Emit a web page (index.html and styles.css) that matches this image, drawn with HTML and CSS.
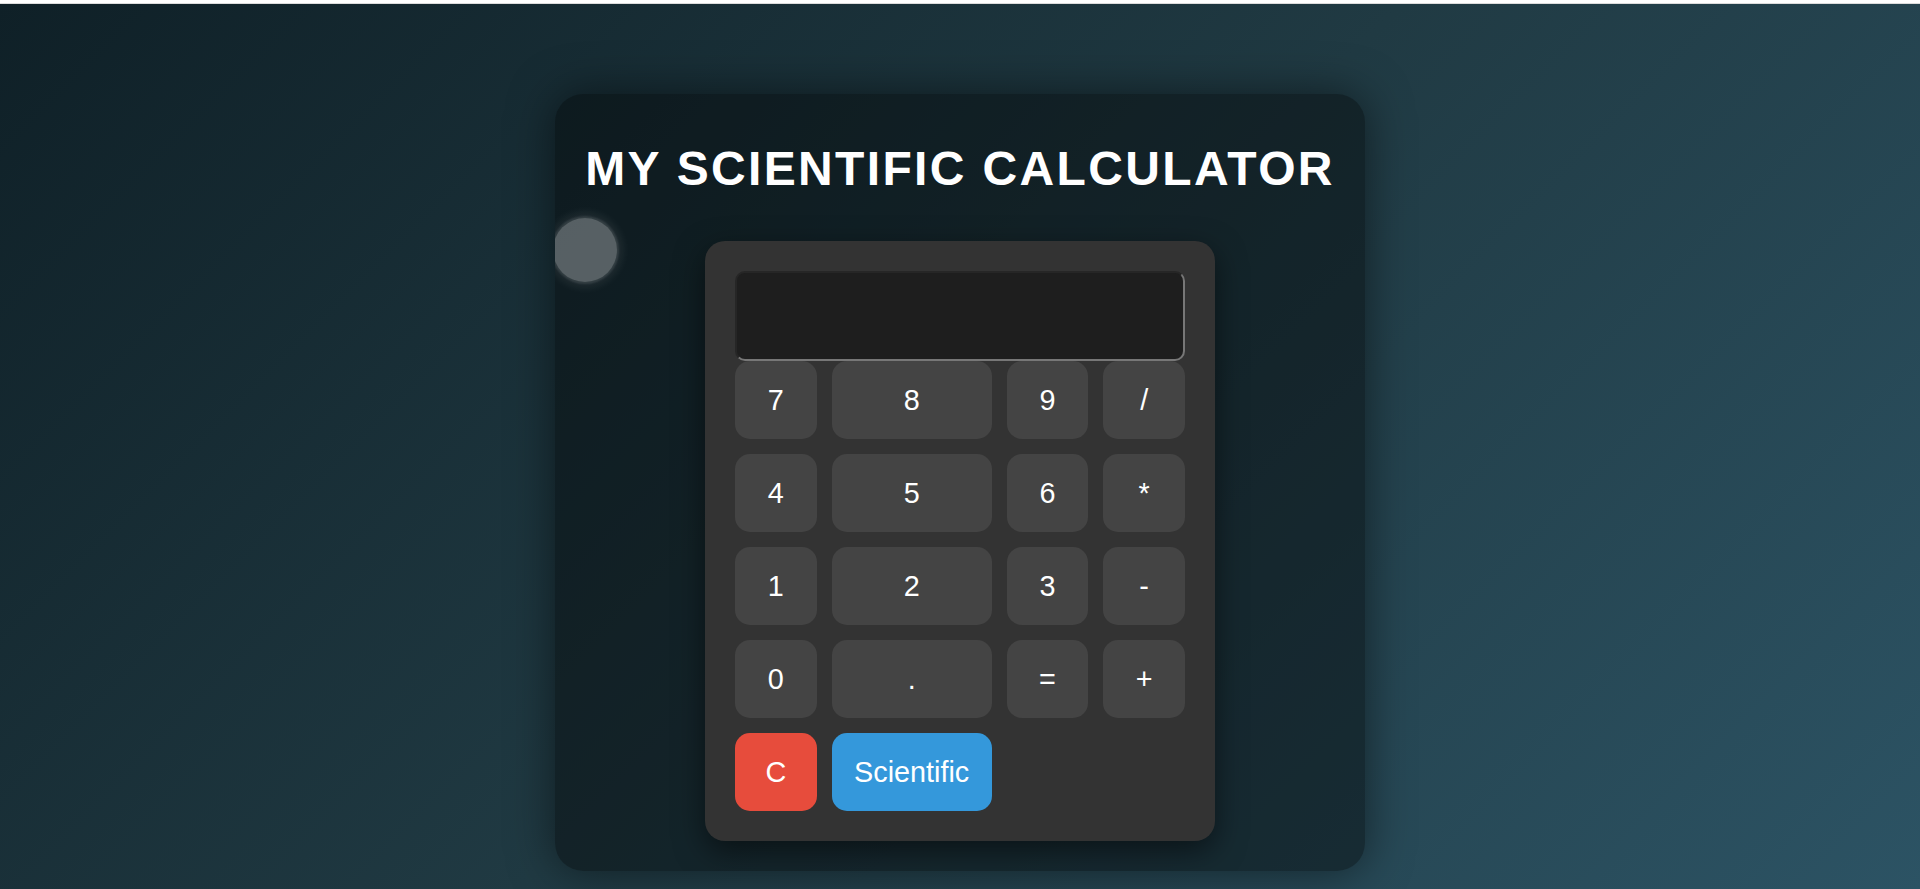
FILE: index.html
```html
<!DOCTYPE html>
<html lang="en">
<head>
<meta charset="utf-8">
<title>My Scientific Calculator</title>
<link rel="stylesheet" href="styles.css">
</head>
<body>
<div class="topbar"></div>
<main class="page">
  <div class="card">
    <span class="orb"></span>
    <h1 class="title">MY SCIENTIFIC CALCULATOR</h1>
    <div class="calc">
      <input class="display" type="text" readonly>
      <div class="keys">
        <button class="key">7</button>
        <button class="key">8</button>
        <button class="key">9</button>
        <button class="key">/</button>
        <button class="key">4</button>
        <button class="key">5</button>
        <button class="key">6</button>
        <button class="key">*</button>
        <button class="key">1</button>
        <button class="key">2</button>
        <button class="key">3</button>
        <button class="key">-</button>
        <button class="key">0</button>
        <button class="key">.</button>
        <button class="key">=</button>
        <button class="key">+</button>
        <button class="key key-clear">C</button>
        <button class="key key-sci">Scientific</button>
      </div>
    </div>
  </div>
</main>
</body>
</html>
```

FILE: styles.css
```css
html, body {
  margin: 0;
  padding: 0;
}

body {
  font-family: "Liberation Sans", Arial, sans-serif;
  background: #ffffff;
  overflow: hidden;
}

.topbar {
  height: 3px;
  background: #ffffff;
  border-bottom: 1px solid #dcdcdc;
}

.page {
  min-height: calc(100vh - 4px);
  box-sizing: border-box;
  padding-top: 90px;
  display: flex;
  justify-content: center;
  align-items: flex-start;
  background: linear-gradient(135deg, #0f2027 0%, #203a43 50%, #2c5364 100%);
}

.card {
  position: relative;
  overflow: hidden;
  padding: 30px;
  border-radius: 28px;
  background: rgba(0, 0, 0, 0.4);
  box-shadow: 0 0 45px rgba(0, 0, 0, 0.5);
}

.orb {
  position: absolute;
  left: -2px;
  top: 124px;
  width: 64px;
  height: 64px;
  border-radius: 50%;
  background: rgba(255, 255, 255, 0.3);
  box-shadow: 0 0 2px 2px rgba(255, 255, 255, 0.1), 0 0 8px 6px rgba(255, 255, 255, 0.07);
}

.title {
  margin: 17px 0 45px;
  font-size: 48px;
  font-weight: bold;
  letter-spacing: 2.35px;
  color: #ffffff;
  text-align: center;
  line-height: normal;
}

.calc {
  width: 450px;
  margin: 0 auto;
  padding: 30px;
  background: #333333;
  border-radius: 20px;
  box-shadow: 0 10px 30px rgba(0, 0, 0, 0.5);
}

.display {
  display: block;
  box-sizing: border-box;
  width: 100%;
  height: 90px;
  margin: 0;
  padding: 0 12px;
  background: #1e1e1e;
  color: #ffffff;
  font-family: "Liberation Sans", Arial, sans-serif;
  font-size: 32px;
  text-align: right;
  border-width: 2px;
  border-style: solid;
  border-color: #262626 #777777 #777777 #262626;
  border-radius: 10px;
  outline: none;
}

.keys {
  display: grid;
  grid-template-columns: repeat(4, 1fr);
  gap: 15px;
}

.key {
  height: 78px;
  padding: 0 22.4px;
  border: none;
  border-radius: 15px;
  background: #444444;
  color: #ffffff;
  font-family: "Liberation Sans", Arial, sans-serif;
  font-size: 28.8px;
  line-height: normal;
  white-space: nowrap;
  cursor: pointer;
}

.key-clear {
  background: #e74c3c;
}

.key-sci {
  background: #3498db;
}
```
